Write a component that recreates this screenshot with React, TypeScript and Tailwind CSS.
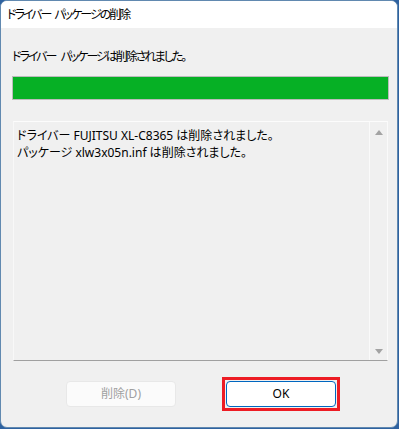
import React from "react";

const jp = "font-['Segoe_UI','Noto_Sans','Noto_Sans_CJK_JP',sans-serif] [font-feature-settings:'palt']";

const Arrow = ({ up }: { up?: boolean }) => (
  <svg width="8" height="5" viewBox="0 0 8 5" className="block">
    {up ? <path d="M0 5 L4 0 L8 5 Z" fill="#a3a3a3" /> : <path d="M0 0 L8 0 L4 5 Z" fill="#a3a3a3" />}
  </svg>
);

export default function App() {
  return (
    <div className="h-[429px] w-[399px] overflow-hidden bg-[#2f62a0]">
      <div className={`flex h-[428px] w-[398px] flex-col overflow-hidden rounded-[7px] border border-[#6189b0] bg-[#f0f0f0] text-[12px] text-black ${jp}`}>
        <div className="flex h-[27px] shrink-0 items-center bg-white pl-[6px] leading-4 tracking-[-2px]">
          ドライバー <span className="ml-[4px]">パッケージの削除</span>
        </div>

        <div className="flex flex-1 flex-col px-[11px] pt-[21px]">
          <p className="h-4 leading-4 tracking-[-2px]">
            ドライバー <span className="ml-[4px]">パッケージは削除されました。</span>
          </p>

          <div className="mt-[11px] h-[24px] w-[377px] border border-[#bcbcbc] bg-[#06b025]" />

          <div className="ml-px mt-[21px] flex h-[240px] w-[375px] border-b border-l border-b-[#a0a0a0] border-l-[#f8f8f8] border-r border-r-[#fafafa] border-t border-t-[#fcfcfc]">
            <div className="flex-1 pl-[3px] pt-[5px] leading-[17px]">
              <p>ドライバー FUJITSU XL-C8365 は削除されました。</p>
              <p>パッケージ xlw3x05n.inf は削除されました。</p>
            </div>
            <div className="flex w-[18px] flex-col items-center justify-between border-l border-[#fafafa] pb-[6px] pt-[8px]">
              <Arrow up />
              <Arrow />
            </div>
          </div>

          <div className="mt-[16px] flex items-center pl-[54px]">
            <button className="h-[26px] w-[110px] rounded-[4px] border border-[#e8e8e8] bg-[#fbfbfb] text-[#a0a0a0]">
              削除(D)
            </button>
            <div className="ml-[46px] border-[3px] border-[#ed1c24] p-px">
              <button className="block h-[26px] w-[110px] rounded-[4px] border border-[#0067c0] bg-white text-black">
                OK
              </button>
            </div>
          </div>
        </div>
      </div>
    </div>
  );
}
